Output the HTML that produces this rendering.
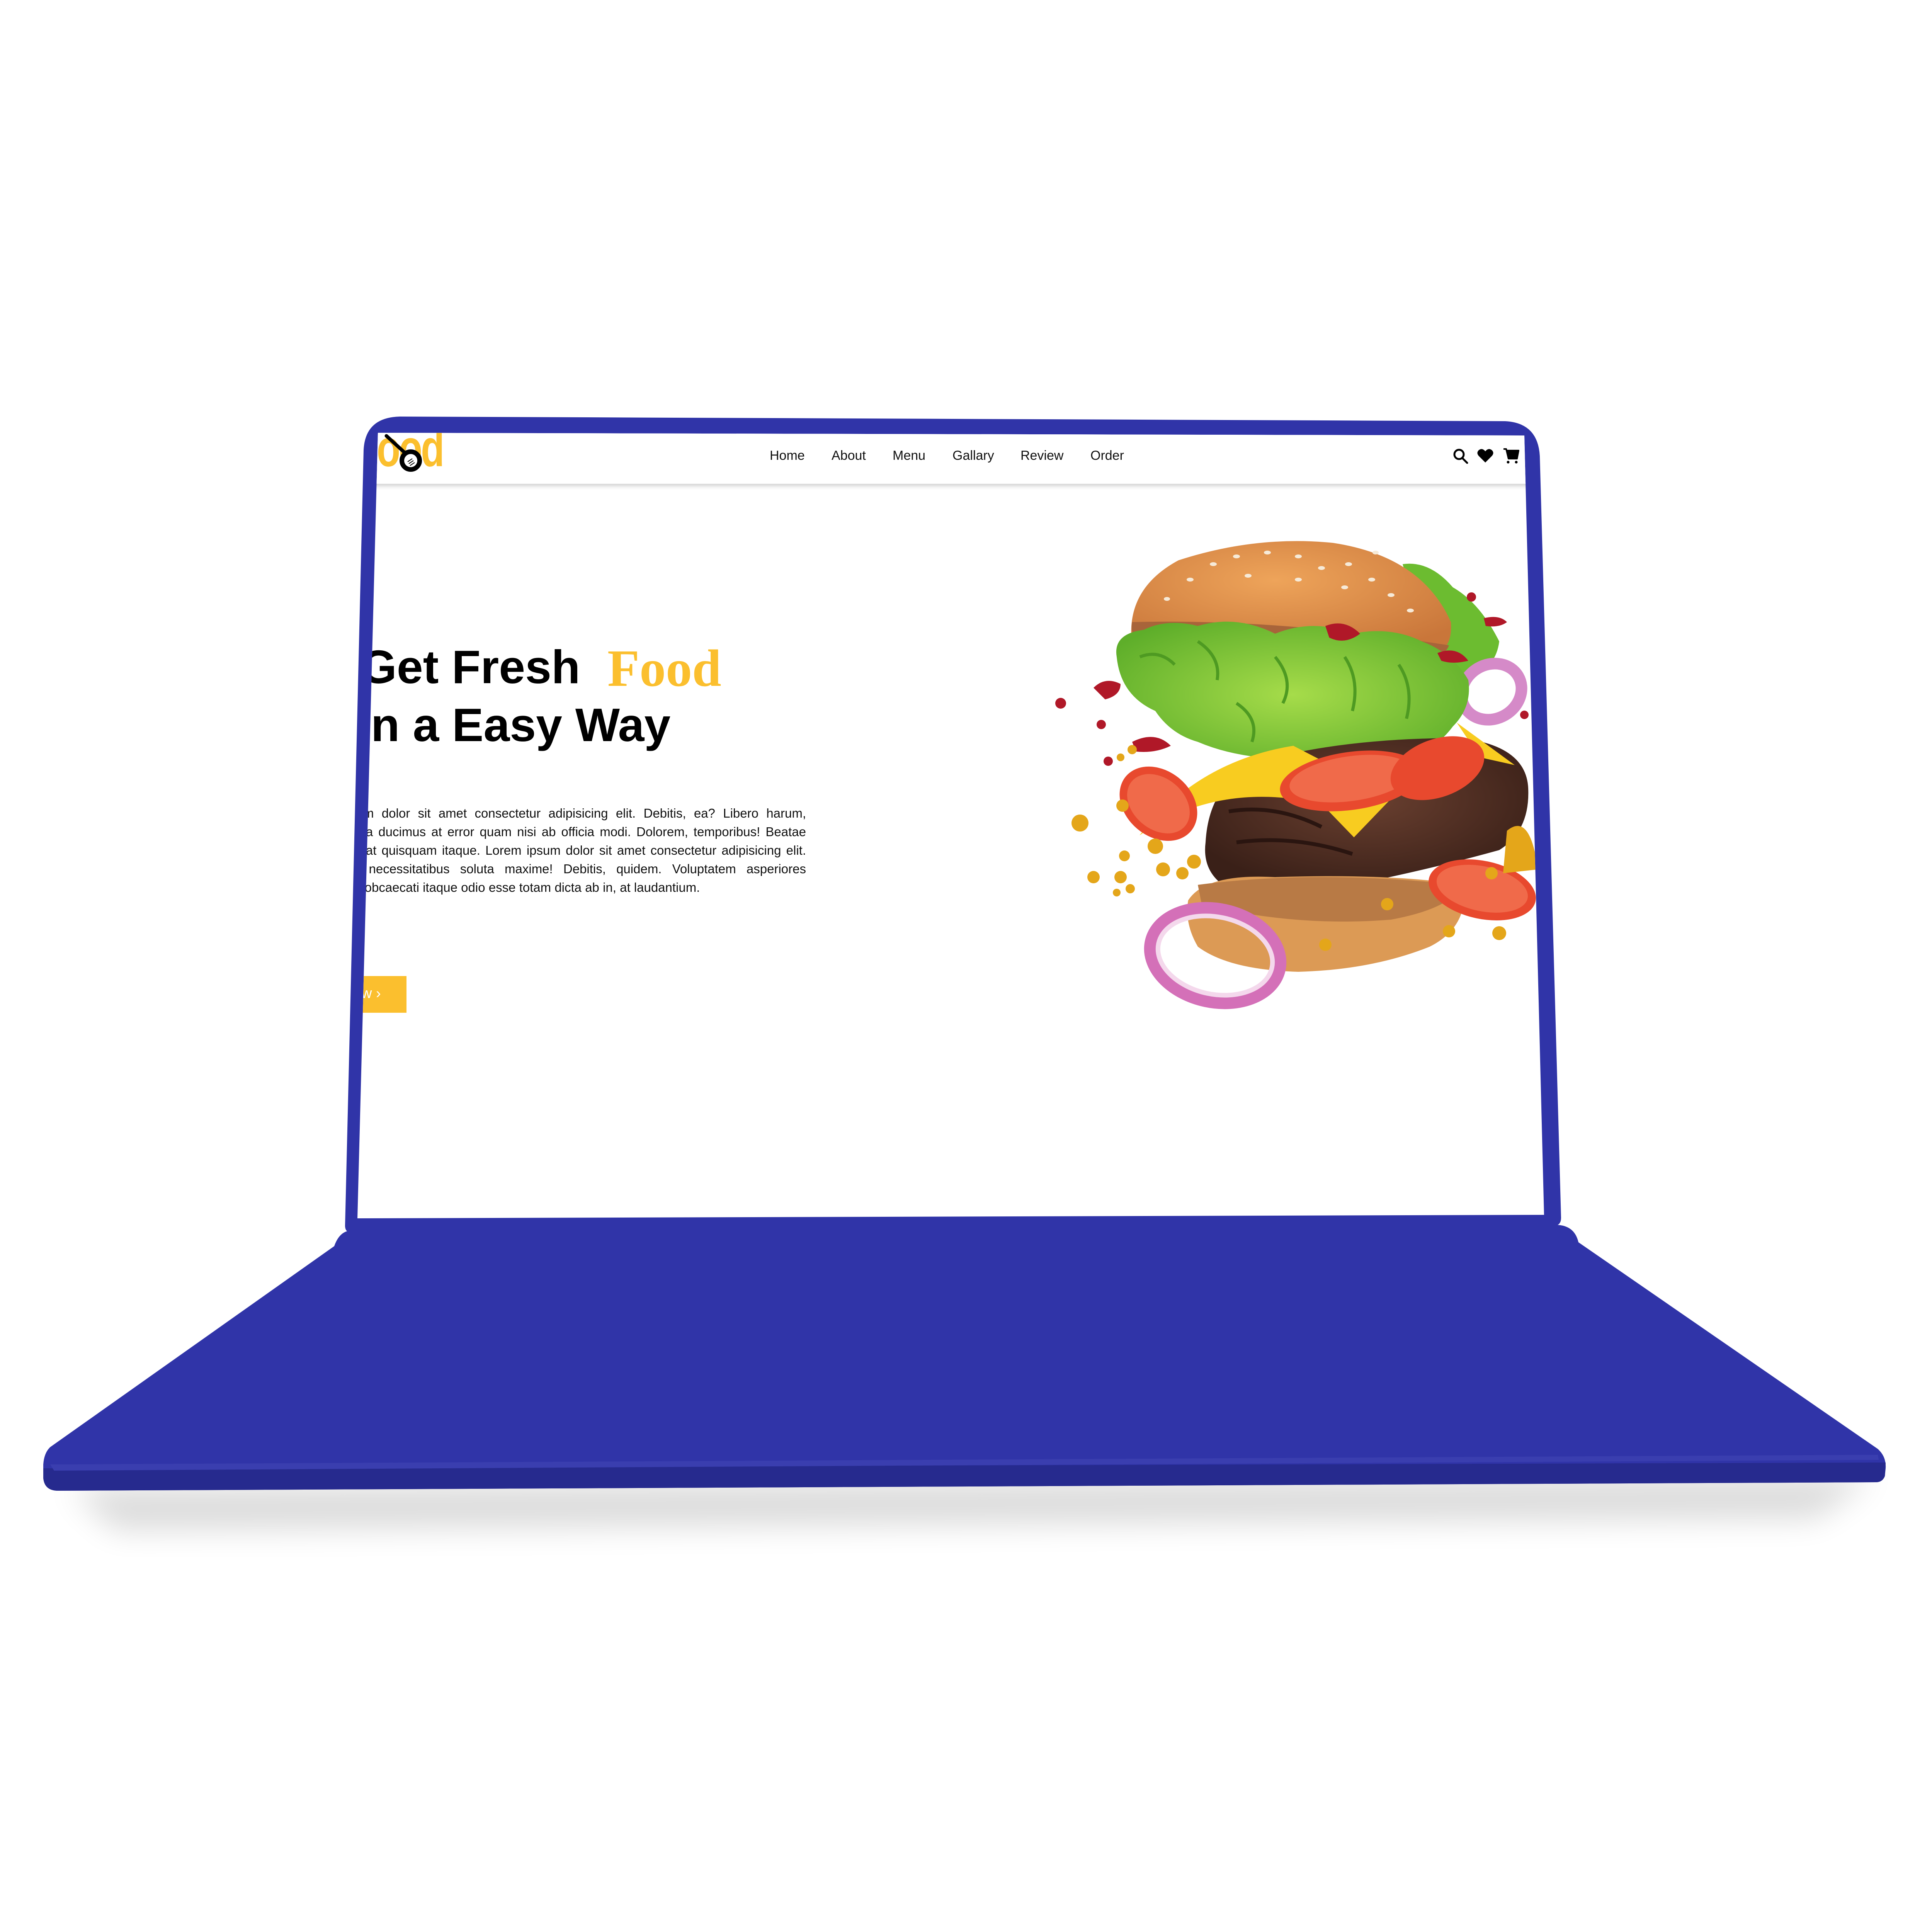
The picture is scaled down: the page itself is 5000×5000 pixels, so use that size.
<!DOCTYPE html>
<html><head><meta charset="utf-8"><style>
html,body{margin:0;padding:0;background:#fff;}
body{width:5000px;height:5000px;position:relative;overflow:hidden;font-family:"Liberation Sans",Arial,sans-serif;}
.abs{position:absolute;}
#screen{position:absolute;left:0;top:0;width:5000px;height:5000px;background:#fff;
clip-path:polygon(978px 1120px,3945px 1127px,3996px 3144px,925px 3153px);}
.nav{position:absolute;top:1160px;font-size:34px;color:#111;}
.pl{position:absolute;font-size:33px;color:#111;text-align:justify;text-align-last:justify;white-space:nowrap;}
</style></head><body>
<svg class="abs" style="left:0;top:0" width="5000" height="5000" viewBox="0 0 5000 5000">
<defs>
<filter id="sh" x="-20%" y="-50%" width="140%" height="200%"><feGaussianBlur stdDeviation="40"/></filter>
</defs>
<path d="M180 3850 L4850 3820 L4700 3930 L300 3960 Z" fill="#000" opacity="0.14" filter="url(#sh)"/>
<path d="M905 3185 L4030 3170 Q4075 3172 4085 3215 L4860 3750 Q4882 3770 4880 3800 L4878 3820 Q4872 3836 4855 3836 L150 3858 Q115 3858 112 3825 L112 3790 Q114 3760 130 3745 L865 3225 Q878 3188 905 3185 Z" fill="#3034a8"/>
<path d="M112 3800 L4880 3785 L4878 3820 Q4872 3836 4855 3836 L150 3858 Q115 3858 112 3825 Z" fill="#262a8e"/>
<path d="M130 3790 L4860 3765 L4862 3778 L140 3806 Z" fill="#3a3eaf"/>
<path d="M1035 1078 L3895 1090 Q3980 1094 3985 1180 L4040 3150 Q4041 3172 4020 3173 L910 3190 Q893 3190 893 3172 L941 1165 Q945 1080 1035 1078 Z" fill="#3034a8"/>
</svg>
<div id="screen">
  <div class="abs" style="left:900px;top:1120px;width:3120px;height:132px;background:#fff;box-shadow:0 6px 10px rgba(0,0,0,0.18);"></div>
  <div class="abs" style="left:975px;top:1128px;font-size:100px;font-weight:bold;color:#fbbf2e;letter-spacing:-4px;line-height:1;transform:scaleY(1.35);transform-origin:0 100%;">ood</div>
  <svg class="abs" style="left:990px;top:1118px" width="110" height="120" viewBox="990 1118 110 120">
    <line x1="1000" y1="1128" x2="1048" y2="1172" stroke="#000" stroke-width="9" stroke-linecap="round"/>
    <circle cx="1063" cy="1192" r="23" fill="#fff" stroke="#000" stroke-width="12"/>
    <path d="M1055 1195 l12 -8 M1058 1200 l12 -8 M1061 1205 l12 -8" stroke="#000" stroke-width="2"/>
  </svg>
  <div class="nav" style="left:1992px">Home</div>
  <div class="nav" style="left:2152px">About</div>
  <div class="nav" style="left:2310px">Menu</div>
  <div class="nav" style="left:2465px">Gallary</div>
  <div class="nav" style="left:2641px">Review</div>
  <div class="nav" style="left:2822px">Order</div>
  <svg class="abs" style="left:3755px;top:1155px" width="185" height="50" viewBox="3755 1155 185 50">
    <circle cx="3776" cy="1176" r="12" fill="none" stroke="#000" stroke-width="5"/>
    <line x1="3785" y1="1186" x2="3797" y2="1198" stroke="#000" stroke-width="5" stroke-linecap="round"/>
    <path d="M3844 1197 L3827 1180 Q3820 1172 3827 1165 Q3836 1158 3844 1168 Q3852 1158 3861 1165 Q3868 1172 3861 1180 Z" fill="#000"/>
    <path d="M3891 1162 L3898 1162 L3904 1187 L3926 1187 L3930 1166 L3900 1166" fill="#000" stroke="#000" stroke-width="4" stroke-linejoin="round"/>
    <circle cx="3903" cy="1196" r="3.5" fill="#000"/><circle cx="3924" cy="1196" r="3.5" fill="#000"/>
  </svg>
  <div class="abs" style="left:932px;top:1665px;font-size:122px;font-weight:bold;color:#000;line-height:1;white-space:nowrap;">Get Fresh</div>
  <div class="abs" style="left:1572px;top:1662px;font-size:136px;font-weight:bold;font-family:'Liberation Serif',serif;color:#fbbf2e;line-height:1;">Food</div>
  <div class="abs" style="left:926px;top:1815px;font-size:122px;font-weight:bold;color:#000;line-height:1;white-space:nowrap;">In a Easy Way</div>
  <div class="pl" style="left:940px;top:2086px;width:1146px;">m dolor sit amet consectetur adipisicing elit. Debitis, ea? Libero harum,</div>
  <div class="pl" style="left:912px;top:2134px;width:1174px;">psa ducimus at error quam nisi ab officia modi. Dolorem, temporibus! Beatae</div>
  <div class="pl" style="left:917px;top:2182px;width:1169px;">s at quisquam itaque. Lorem ipsum dolor sit amet consectetur adipisicing elit.</div>
  <div class="pl" style="left:920px;top:2230px;width:1166px;">i necessitatibus soluta maxime! Debitis, quidem. Voluptatem asperiores</div>
  <div class="abs" style="left:918px;top:2278px;font-size:33px;color:#111;white-space:nowrap;">s obcaecati itaque odio esse totam dicta ab in, at laudantium.</div>
  <div class="abs" style="left:880px;top:2526px;width:172px;height:95px;background:#fbbf2e;"></div>
  <div class="abs" style="left:935px;top:2550px;font-size:38px;color:#fff;">w &#8250;</div>
  <svg class="abs" style="left:2700px;top:1350px" width="1350" height="1300" viewBox="2700 1350 1350 1300">
    <defs>
      <radialGradient id="bun" cx="0.45" cy="0.35" r="0.7"><stop offset="0" stop-color="#eea45a"/><stop offset="1" stop-color="#c9763a"/></radialGradient>
      <radialGradient id="pat" cx="0.5" cy="0.4" r="0.6"><stop offset="0" stop-color="#6a4030"/><stop offset="1" stop-color="#3a2018"/></radialGradient>
      <radialGradient id="let" cx="0.5" cy="0.5" r="0.6"><stop offset="0" stop-color="#a6dc4a"/><stop offset="1" stop-color="#5eae2a"/></radialGradient>
    </defs>
    <path d="M3630 1460 Q3700 1450 3760 1520 Q3830 1560 3880 1660 Q3870 1740 3780 1760 L3700 1700 Z" fill="#6cbc30"/>
    <path d="M2928 1650 Q2920 1520 3050 1450 Q3250 1385 3450 1405 Q3680 1440 3755 1610 Q3760 1690 3700 1690 Q3300 1650 2950 1625 Z" fill="url(#bun)"/>
    <path d="M2930 1610 Q3300 1600 3750 1670 Q3740 1700 3690 1695 Q3300 1665 2940 1650 Q2925 1635 2930 1610 Z" fill="#a8643a"/>
    <g fill="#f6ead8">
      <ellipse cx="3140" cy="1460" rx="9" ry="5"/><ellipse cx="3200" cy="1440" rx="9" ry="5"/><ellipse cx="3280" cy="1430" rx="9" ry="5"/><ellipse cx="3360" cy="1440" rx="9" ry="5"/><ellipse cx="3420" cy="1470" rx="9" ry="5"/><ellipse cx="3490" cy="1460" rx="9" ry="5"/><ellipse cx="3550" cy="1500" rx="9" ry="5"/><ellipse cx="3600" cy="1540" rx="9" ry="5"/><ellipse cx="3480" cy="1520" rx="9" ry="5"/><ellipse cx="3230" cy="1490" rx="9" ry="5"/><ellipse cx="3080" cy="1500" rx="9" ry="5"/><ellipse cx="3650" cy="1580" rx="9" ry="5"/><ellipse cx="3360" cy="1500" rx="9" ry="5"/><ellipse cx="3020" cy="1550" rx="8" ry="5"/><ellipse cx="3560" cy="1430" rx="8" ry="5"/>
    </g>
    <ellipse cx="3860" cy="1790" rx="80" ry="70" fill="none" stroke="#d58ac8" stroke-width="30" transform="rotate(-30 3860 1790)"/>
    <path d="M2890 1700 Q2880 1640 2960 1630 Q3020 1600 3100 1620 Q3200 1590 3300 1640 Q3400 1600 3500 1640 Q3600 1620 3680 1660 Q3760 1690 3800 1760 Q3810 1830 3760 1880 Q3700 1960 3620 1950 Q3520 1990 3430 1980 Q3330 2000 3260 1960 Q3170 1950 3100 1920 Q3030 1900 2990 1840 Q2900 1800 2890 1700 Z" fill="url(#let)"/>
    <path d="M2950 1700 Q3000 1680 3040 1720 M3100 1660 Q3160 1700 3150 1760 M3300 1700 Q3350 1760 3320 1820 M3480 1700 Q3520 1760 3500 1840 M3620 1720 Q3660 1780 3640 1860 M3200 1820 Q3260 1860 3240 1920" stroke="#4e9a22" stroke-width="8" fill="none"/>
    <g fill="#b01828">
      <circle cx="2745" cy="1820" r="14"/><circle cx="2850" cy="1875" r="12"/><circle cx="2868" cy="1970" r="12"/><circle cx="3808" cy="1545" r="12"/><circle cx="3945" cy="1850" r="11"/>
      <path d="M2830 1780 Q2860 1750 2900 1770 Q2900 1800 2860 1810 Z"/><path d="M2930 1920 Q2990 1890 3030 1930 Q2990 1950 2940 1945 Z"/>
      <path d="M3430 1620 Q3480 1600 3520 1640 Q3480 1670 3440 1650 Z"/><path d="M3720 1690 Q3770 1670 3800 1710 Q3760 1720 3730 1710 Z"/>
      <path d="M3840 1600 Q3880 1590 3900 1610 Q3880 1625 3845 1620 Z"/>
    </g>
    <path d="M3120 2180 Q3130 2000 3300 1960 Q3500 1910 3780 1910 Q3950 1930 3955 2040 Q3960 2150 3880 2200 Q3700 2250 3500 2290 Q3300 2320 3180 2300 Q3110 2260 3120 2180 Z" fill="url(#pat)"/>
    <path d="M3180 2100 Q3300 2080 3420 2140 M3200 2180 Q3350 2160 3500 2210" stroke="#2a1510" stroke-width="10" fill="none"/>
    <path d="M2949 2162 Q3100 1970 3347 1930 L3604 2063 L3504 2167 L3420 2080 Q3150 2020 2949 2162 Z" fill="#f8cc20"/>
    <path d="M3770 1870 L3920 1980 L3830 1960 Z" fill="#f8cc20"/>
    <ellipse cx="3496" cy="2021" rx="185" ry="75" fill="#e8492e" transform="rotate(-8 3496 2021)"/>
    <ellipse cx="3496" cy="2015" rx="160" ry="58" fill="#f06a4a" transform="rotate(-8 3496 2015)"/>
    <ellipse cx="3720" cy="1988" rx="126" ry="75" fill="#e8492e" transform="rotate(-20 3720 1988)"/>
    <ellipse cx="2998" cy="2080" rx="110" ry="85" fill="#e8492e" transform="rotate(40 2998 2080)"/>
    <ellipse cx="2998" cy="2080" rx="90" ry="66" fill="#f06a4a" transform="rotate(40 2998 2080)"/>
    <path d="M3075 2330 Q3120 2260 3300 2270 Q3600 2260 3790 2290 Q3800 2400 3700 2450 Q3550 2510 3360 2515 Q3180 2510 3100 2450 Q3065 2390 3075 2330 Z" fill="#dc9a55"/>
    <path d="M3100 2290 Q3400 2250 3780 2290 Q3760 2350 3600 2380 Q3350 2400 3110 2340 Z" fill="#b87a45"/>
    <ellipse cx="3836" cy="2303" rx="141" ry="75" fill="#e8492e" transform="rotate(12 3836 2303)"/>
    <ellipse cx="3836" cy="2300" rx="120" ry="58" fill="#f06a4a" transform="rotate(12 3836 2300)"/>
    <ellipse cx="3145" cy="2473" rx="168" ry="118" fill="none" stroke="#d470b8" stroke-width="36" transform="rotate(12 3145 2473)"/>
    <ellipse cx="3145" cy="2473" rx="150" ry="100" fill="none" stroke="#f4d8ec" stroke-width="12" transform="rotate(12 3145 2473)"/>
    <g fill="#e4a61a">
      <circle cx="2795" cy="2130" r="22"/><circle cx="2905" cy="2085" r="16"/><circle cx="2910" cy="2215" r="14"/><circle cx="2830" cy="2270" r="16"/><circle cx="2900" cy="2270" r="16"/><circle cx="2925" cy="2300" r="12"/><circle cx="3010" cy="2250" r="18"/><circle cx="2990" cy="2190" r="20"/><circle cx="3060" cy="2260" r="16"/><circle cx="3090" cy="2230" r="18"/><circle cx="2890" cy="2310" r="10"/><circle cx="3860" cy="2260" r="16"/><circle cx="3750" cy="2410" r="16"/><circle cx="3880" cy="2415" r="18"/><circle cx="3430" cy="2445" r="16"/><circle cx="3590" cy="2340" r="16"/><circle cx="2930" cy="1940" r="12"/><circle cx="2900" cy="1960" r="10"/>
      <path d="M3900 2150 Q3960 2100 3980 2250 L3890 2260 Z"/>
    </g>
  </svg>
</div>
</body></html>
